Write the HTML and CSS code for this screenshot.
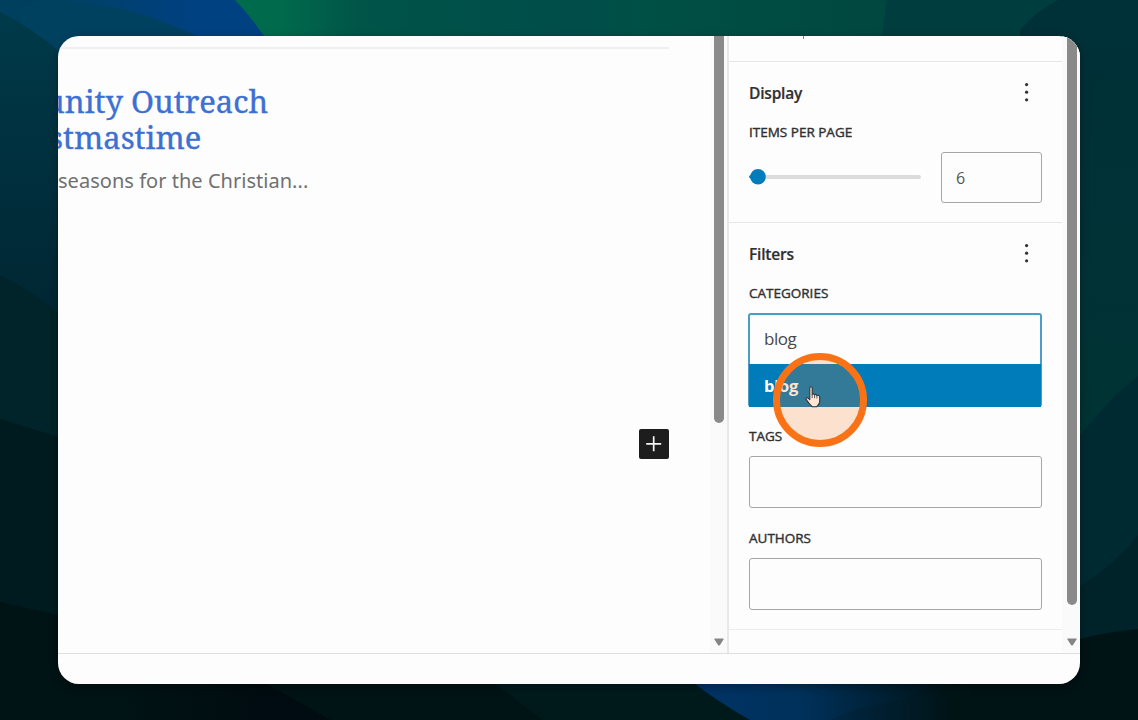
FILE: index.html
```html
<!DOCTYPE html>
<html lang="en">
<head>
<meta charset="utf-8">
<title>Block editor</title>
<link rel="stylesheet" href="styles.css">
</head>
<body>
<div class="stage">
  <svg class="backdrop" width="1138" height="720" viewBox="0 0 1138 720" aria-hidden="true">
    <defs>
      <linearGradient id="green" x1="235" x2="1138" y1="0" y2="0" gradientUnits="userSpaceOnUse">
        <stop offset="0" stop-color="#006c4c"/><stop offset=".05" stop-color="#006a4c"/><stop offset=".14" stop-color="#005448"/><stop offset=".38" stop-color="#004d4a"/><stop offset=".45" stop-color="#005046"/><stop offset=".7" stop-color="#004840"/><stop offset="1" stop-color="#003d3d"/>
      </linearGradient>
      <linearGradient id="leftA" x1="0" x2="0" y1="10" y2="310" gradientUnits="userSpaceOnUse"><stop offset="0" stop-color="#003a4a"/><stop offset="1" stop-color="#002633"/></linearGradient>
      <linearGradient id="rightA" x1="0" x2="0" y1="0" y2="430" gradientUnits="userSpaceOnUse"><stop offset="0" stop-color="#003038"/><stop offset="1" stop-color="#003334"/></linearGradient>
      <linearGradient id="blueTop" x1="60" x2="200" y1="0" y2="0" gradientUnits="userSpaceOnUse"><stop offset="0" stop-color="#00415f"/><stop offset=".6" stop-color="#004078"/><stop offset="1" stop-color="#004181"/></linearGradient>
      <linearGradient id="blueBottom" x1="700" x2="950" y1="0" y2="0" gradientUnits="userSpaceOnUse"><stop offset="0" stop-color="#003366"/><stop offset=".4" stop-color="#00315b"/><stop offset="1" stop-color="#001315"/></linearGradient>
      <linearGradient id="darkBottom" x1="120" x2="260" y1="0" y2="0" gradientUnits="userSpaceOnUse"><stop offset="0" stop-color="#001315"/><stop offset="1" stop-color="#000c11"/></linearGradient>
    </defs>
    <rect width="1138" height="720" fill="#00405e"/>
    <path d="M40 0H240L272 45H180Q110 0 20 10Z" fill="url(#blueTop)"/>
    <path d="M20 10Q90 -4 150 17Q184 29 204 40H20Z" fill="#004160"/>
    <path d="M0 12Q30 26 62 54V320H0Z" fill="url(#leftA)"/>
    <path d="M235 0H1138V400H600V80H290Q263 28 235 0Z" fill="url(#green)"/>
    <path d="M887 0H1138V80H876Z" fill="#003d3e"/>
    <path d="M1058 0H1138V480H1020V30Q1035 12 1058 0Z" fill="url(#rightA)"/>
    <path d="M1138 376Q1108 399 1070 448V600H1138Z" fill="#002a31"/>
    <path d="M1138 535Q1110 570 1070 592V650H1138Z" fill="#002329"/>
    <path d="M0 275Q30 290 62 316V450H0Z" fill="#002429"/>
    <path d="M0 419L62 438V620H0Z" fill="#001b1f"/>
    <path d="M0 602L62 616V670H1060V645Q1095 633 1138 629V720H0Z" fill="#001315"/>
    <path d="M120 680H260L331 720H120Z" fill="url(#darkBottom)"/>
    <path d="M490 680H695L750 720H543Z" fill="#001a1c"/>
    <path d="M690 680H980V720H750Q718 702 690 680Z" fill="url(#blueBottom)"/>
    <path d="M860 708Q925 697 970 680V720H830Z" fill="#001a20" opacity=".2"/>
  </svg>

  <main class="window">
    <div class="workspace">
      <section class="canvas">
        <div class="content">
          <div class="rule"></div>
          <h2 class="post-title">unity Outreach<br><span class="second">stmastime</span></h2>
          <p class="excerpt">seasons for the Christian...</p>
          <button class="add" aria-label="Add block">
            <svg width="30" height="30" viewBox="0 0 30 30"><path d="M14.7 7.3v15M7.2 14.8h15" stroke="#f5f5f5" stroke-width="1.7" fill="none"/></svg>
          </button>
        </div>
        <div class="scroll scroll-main"><div class="thumb"></div><svg width="10" height="8" viewBox="0 0 10 8"><path d="M.8.6H9.2Q10 .6 9.5 1.5L6 7Q5 8 4 7L.5 1.5Q0 .6.8.6Z" fill="#858585"/></svg></div>
      </section>
      <aside class="sidebar">
        <div class="panels">
          <div class="clipped"><i></i></div>
          <section class="panel">
            <header><h3>Display</h3><svg class="dots" width="6" height="20" viewBox="0 0 6 20"><g fill="#333"><circle cx="2.6" cy="2.6" r="1.6"/><circle cx="2.6" cy="10.2" r="1.6"/><circle cx="2.6" cy="17.8" r="1.6"/></g></svg></header>
            <label>ITEMS PER PAGE</label>
            <div class="range-row">
              <div class="range"><div class="track"></div><svg class="knob" width="17" height="16" viewBox="0 0 17 16"><path d="M0 7.8Q0 6.5 3 5.5V10Q0 9 0 7.8Z" fill="#007cba"/><circle cx="9" cy="7.8" r="7.8" fill="#007cba"/></svg></div>
              <div class="number">6</div>
            </div>
          </section>
          <section class="panel filters">
            <header><h3>Filters</h3><svg class="dots" width="6" height="20" viewBox="0 0 6 20"><g fill="#333"><circle cx="2.6" cy="2.6" r="1.6"/><circle cx="2.6" cy="10.2" r="1.6"/><circle cx="2.6" cy="17.8" r="1.6"/></g></svg></header>
            <label>CATEGORIES</label>
            <div class="combo">
              <div class="query">blog</div>
              <div class="option">blog</div>
              <div class="pointer">
                <svg class="hand" width="16" height="22" viewBox="0 0 16 22"><path d="M4.8 13.7V2.2Q4.8.8 6 .8T7.2 2.2V8.2Q8.8 7.3 9.6 8.7Q11.1 8 11.9 9.4Q14.7 8.9 14.7 11.5V15Q14.7 18 12.7 19.5L11.5 20.8H7.3L6.2 19.6Q4.5 18.2 1.1 13.4Q.5 12 1.8 11.8Q3 11.7 4.8 13.7Z" fill="#ffe6d8" stroke="#353535" stroke-width="1.1" stroke-linejoin="round"/><path d="M7.2 8v4M9.6 8.7v3.5M11.9 9.5V12.5" stroke="#353535" stroke-width=".8"/></svg>
              </div>
            </div>
            <label>TAGS</label>
            <div class="field"></div>
            <label>AUTHORS</label>
            <div class="field"></div>
          </section>
          <div class="last"></div>
        </div>
        <div class="scroll scroll-side"><div class="thumb"></div><svg width="10" height="8" viewBox="0 0 10 8"><path d="M.8.6H9.2Q10 .6 9.5 1.5L6 7Q5 8 4 7L.5 1.5Q0 .6.8.6Z" fill="#858585"/></svg></div>
      </aside>
    </div>
    <footer class="status"></footer>
  </main>
</div>
</body>
</html>
```
FILE: styles.css
```css
* { box-sizing: border-box; }
body { margin: 0; font-family: "Open Sans", "Noto Sans", sans-serif; color: #303030; }
.stage { position: relative; width: 1138px; height: 720px; padding: 36px 58px; overflow: hidden; }
.backdrop { position: absolute; inset: 0; }
.window { position: relative; width: 1022px; height: 648px; display: flex; flex-direction: column; background: #fdfdfd; border-radius: 21px; overflow: hidden; box-shadow: 0 3px 10px rgba(0,0,0,.3); }
.workspace { display: flex; height: 617px; }
.status { flex: 1; border-top: 1px solid #dedede; }
.canvas { display: flex; width: 669px; overflow: hidden; }
.content { width: 652px; padding-top: 11px; }
.rule { width: 611px; height: 2px; background: #efefef; }
.post-title { margin: 34px 0 0 -13px; font: 400 31px/36px "Noto Serif", "DejaVu Serif Condensed", "DejaVu Serif", serif; color: #3c70d2; white-space: nowrap; -webkit-text-stroke: .35px #3c70d2; }
.second { margin-left: 4px; }
.excerpt { margin: 12px 0 0; font: 20px/28px "Noto Sans", sans-serif; letter-spacing: .03px; color: #707070; white-space: nowrap; }
.add { display: block; width: 30px; height: 30px; margin: 234px 0 0 581px; padding: 0; border: 0; border-radius: 2px; background: #1d1d1d; }
.add svg { display: block; }
.scroll { display: flex; flex-direction: column; justify-content: space-between; background: #fafafa; padding-bottom: 7px; }
.scroll-main { width: 17px; padding-left: 4px; }
.thumb { width: 10px; background: #8a8a8a; border-radius: 0 0 5px 5px; }
.scroll-main .thumb { height: 387px; }
.sidebar { display: flex; width: 353px; border-left: 2px solid #e8e8e8; }
.panels { width: 333px; }
.clipped { height: 25px; padding-left: 74px; }
.clipped i { display: block; width: 1px; height: 3px; background: #858585; }
.scroll-side { width: 18px; padding-left: 5px; }
.scroll-side .thumb { height: 569px; }
.panel { height: 161px; padding: 0 20px; border-top: 1px solid #e7e7e7; }
.panel header { display: flex; align-items: center; justify-content: space-between; height: 62px; padding-right: 12px; }
h3 { margin: 0; font: 600 15.5px/22px "Open Sans", sans-serif; letter-spacing: -.2px; -webkit-text-stroke: .2px #303030; }
.dots { margin-top: -2px; }
label { display: block; height: 16px; margin-bottom: 12px; font: 500 13.5px/16px "Open Sans", sans-serif; letter-spacing: 0; color: #303030; -webkit-text-stroke: .4px #303030; }
.range-row { display: flex; justify-content: space-between; align-items: center; }
.range { position: relative; width: 172px; height: 16px; padding-top: 5px; }
.track { height: 4px; background: #dcdcdc; border-radius: 2px; }
.knob { position: absolute; left: 0; top: -1px; }
.number { width: 101px; height: 51px; border: 1px solid #a6a6a6; border-radius: 3px; padding-left: 14px; font-size: 16px; line-height: 50px; color: #555; }
.filters { height: 407px; }
.combo { position: relative; width: 294px; height: 94px; margin: 0 0 21px -1px; border: 2px solid #4b9dc5; border-radius: 3px; }
.query { height: 50px; padding-left: 14px; font-size: 17px; line-height: 47px; letter-spacing: -.5px; color: #484848; }
.option { height: 43px; margin: -1px -1px -2px; padding-left: 15px; background: #007cba; color: #fff; font-size: 16.5px; line-height: 43px; font-weight: 700; letter-spacing: -.2px; }
.pointer { position: absolute; left: 23px; top: 38px; width: 94px; height: 94px; border: 7px solid #f97316; border-radius: 50%; background: rgba(249,115,22,.2); background-clip: padding-box; z-index: 2; }
.hand { position: absolute; left: 25px; top: 26px; }
.field { height: 52px; margin-bottom: 22px; border: 1px solid #a6a6a6; border-radius: 3px; }
.last { border-top: 1px solid #ededed; }
```
